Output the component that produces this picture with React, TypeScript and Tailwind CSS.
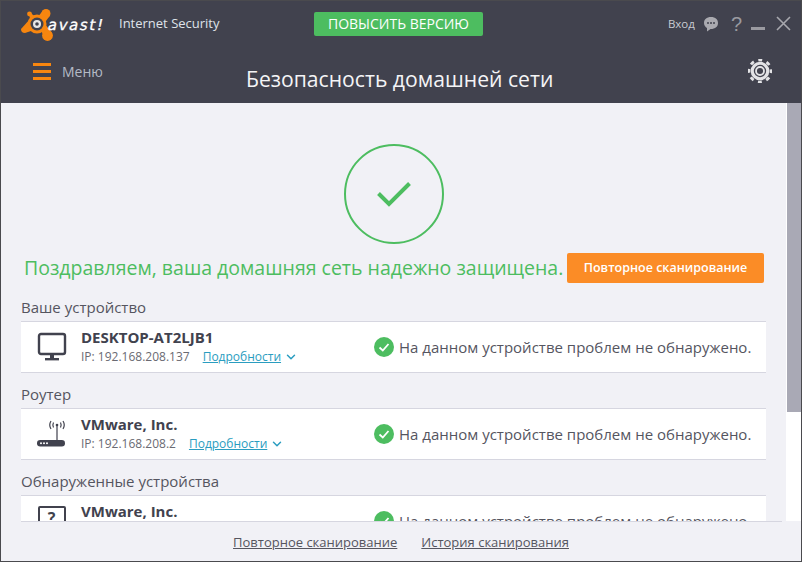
import { ChevronDown } from 'lucide-react';

const font = "font-['Open_Sans','Noto_Sans',sans-serif]";

function Logo() {
    return (
        <div className="flex w-[84px] items-center pt-[3px]">
            <svg width="34" height="32" viewBox="0 0 34 32" className="shrink-0">
                <g fill="#f7860f">
                    <circle cx="16" cy="15" r="9.5" />
                    <circle cx="25" cy="4.5" r="4.5" />
                    <circle cx="26.5" cy="26.5" r="5.4" />
                    <circle cx="8.5" cy="5" r="2.4" />
                    <path d="M16 9 L22 1.5 L29 6.5 L22 16 Z" />
                    <path d="M18 18 L24 15 L31 24 L25 31 Z" />
                    <path d="M7.5 5.5 L10 4 L15 9 L11 12 Z" />
                    <path d="M0 20 L9 10 L13 21 L4 24 Q0 24 0 20 Z" />
                </g>
                <circle cx="16" cy="15" r="6.5" fill="#41424e" />
                <circle cx="16" cy="15" r="4" fill="#e8e8e8" />
                <circle cx="16" cy="15" r="1.8" fill="#41424e" />
            </svg>
            <span className="-ml-[7px] -skew-x-12 font-['DejaVu_Sans',sans-serif] text-[15px] leading-none tracking-[1.6px] text-white [-webkit-text-stroke:0.3px_white]">
                avast!
            </span>
        </div>
    );
}

function Gear() {
    return (
        <svg width="24" height="24" viewBox="0 0 26 26">
            <circle cx="13" cy="13" r="8.4" fill="none" stroke="#e3e3e6" strokeWidth="3.4" />
            <circle cx="13" cy="13" r="12" fill="none" stroke="#e3e3e6" strokeWidth="3" strokeDasharray="4.3 5.1" strokeDashoffset="2.1" />
            <circle cx="13" cy="13" r="4.3" fill="none" stroke="#e3e3e6" strokeWidth="2" />
        </svg>
    );
}

function MonitorIcon() {
    return (
        <svg width="30" height="30" viewBox="0 0 30 30">
            <rect x="2" y="2" width="26" height="20" rx="2" fill="none" stroke="#41424e" strokeWidth="2.4" />
            <rect x="13" y="23" width="4" height="3" fill="#41424e" />
            <rect x="8" y="26" width="14" height="2.4" fill="#41424e" />
        </svg>
    );
}

function RouterIcon() {
    return (
        <svg width="30" height="30" viewBox="0 0 30 30">
            <g fill="none" stroke="#41424e" strokeWidth="1.2">
                <path d="M14 2 Q11.5 6 14 10" />
                <path d="M16.5 3.5 Q15.2 6 16.5 8.5" />
                <path d="M23.5 3.5 Q24.8 6 23.5 8.5" />
                <path d="M26 2 Q28.5 6 26 10" />
            </g>
            <circle cx="20" cy="6" r="1.3" fill="#41424e" />
            <rect x="19.4" y="6" width="1.2" height="16" fill="#41424e" />
            <rect x="0" y="21" width="28" height="6.5" rx="3.2" fill="#41424e" />
            <circle cx="4" cy="24.2" r="1" fill="#fff" />
            <circle cx="7" cy="24.2" r="1" fill="#fff" />
            <circle cx="10" cy="24.2" r="1" fill="#fff" />
        </svg>
    );
}

function UnknownIcon() {
    return (
        <div className="flex h-[30px] w-[28px] items-center justify-center rounded-[2px] border-2 border-[#41424e] pb-[6px] text-[16px] font-bold text-[#41424e]">
            ?
        </div>
    );
}

function OkCheck() {
    return (
        <svg width="20" height="20" viewBox="0 0 20 20" className="shrink-0">
            <circle cx="10" cy="10" r="10" fill="#4dbd60" />
            <path d="M5.5 10.5 L8.8 13.5 L14.5 7" fill="none" stroke="#fff" strokeWidth="1.8" />
        </svg>
    );
}

type DeviceRowProps = {
    icon: React.ReactNode;
    name: string;
    ip: string;
};

function DeviceRow({ icon, name, ip }: DeviceRowProps) {
    return (
        <div className="flex h-[52px] w-[745px] items-center border-y border-[#d6d6e0] bg-white">
            <div className="flex w-[60px] shrink-0 justify-center pl-[1px]">{icon}</div>
            <div className="w-[293px] shrink-0 pb-[1px] text-[#41424e]">
                <div className="mb-[2px] text-[15px] leading-[19px] font-bold">{name}</div>
                <div className="flex items-center text-[12px] leading-[16px] text-[#6a6a72]">
                    <span>IP: {ip}</span>
                    <a className="ml-[13px] text-[#2a9dc0] underline">Подробности</a>
                    <ChevronDown size={14} strokeWidth={2.5} className="ml-[3px] text-[#2a9dc0]" />
                </div>
            </div>
            <OkCheck />
            <span className="ml-[5px] text-[15px] whitespace-nowrap text-[#55555f]">
                На данном устройстве проблем не обнаружено.
            </span>
        </div>
    );
}

function SectionTitle({ children }: { children: React.ReactNode }) {
    return <div className="h-[35px] pt-[11px] text-[15px] leading-[20px] text-[#55555f]">{children}</div>;
}

export default function App() {
    return (
        <div className={`${font} flex h-[562px] w-[802px] flex-col overflow-hidden border border-[#4a4a4e] bg-[#f1f1f6]`}>
            <header className="h-[102px] shrink-0 bg-[#41424e]">
                <div className="flex h-[43px] items-center pt-[2px] pl-[20px]">
                    <Logo />
                    <span className="ml-[14px] w-[195px] text-[13px] text-[#dfe3ea]">Internet Security</span>
                    <button className="h-[24px] w-[169px] rounded-[2px] bg-[#4dbd60] text-[14px] text-white">
                        ПОВЫСИТЬ ВЕРСИЮ
                    </button>
                    <span className="ml-auto text-[11.5px] text-[#c8cbd2]">Вход</span>
                    <svg width="16" height="16" viewBox="0 0 16 16" className="ml-[8px]">
                        <path d="M8 1 C3.5 1 1 3.5 1 7 C1 9.5 2.5 11 4 12 L4 15.5 L7.5 13 C12.5 13 15 10.5 15 7 C15 3.5 12.5 1 8 1 Z" fill="#aaaab0" />
                        <circle cx="5" cy="7" r="1" fill="#41424e" />
                        <circle cx="8" cy="7" r="1" fill="#41424e" />
                        <circle cx="11" cy="7" r="1" fill="#41424e" />
                    </svg>
                    <span className="ml-[12px] font-['Liberation_Sans',sans-serif] text-[20px] leading-none text-[#9a9aa0]">?</span>
                    <div className="mt-[10px] ml-[9px] h-[3px] w-[14px] bg-[#9a9aa0]" />
                    <svg width="15" height="15" viewBox="0 0 15 15" className="mr-[10px] ml-[11px]">
                        <path d="M1 1 L14 14 M14 1 L1 14" stroke="#a8a8ae" strokeWidth="1.6" />
                    </svg>
                </div>
                <div className="flex h-[59px] items-start">
                    <div className="flex w-[245px] items-center pt-[17px] pl-[32px]">
                        <div className="flex w-[18px] flex-col gap-[4px]">
                            <div className="h-[3px] bg-[#f7860f]" />
                            <div className="h-[3px] bg-[#f7860f]" />
                            <div className="h-[3px] bg-[#f7860f]" />
                        </div>
                        <span className="ml-[11px] text-[14px] text-[#b4bac6]">Меню</span>
                    </div>
                    <h1 className="pt-[20px] text-[21.15px] leading-[30px] whitespace-nowrap text-[#f4f4f6]">
                        Безопасность домашней сети
                    </h1>
                    <div className="ml-auto pt-[15px] pr-[29px]">
                        <Gear />
                    </div>
                </div>
            </header>
            <div className="flex h-[418px] shrink-0 bg-white">
                <main className="h-full w-[785px] shrink-0 overflow-hidden bg-[#f1f1f6] pl-[20px]">
                    <div className="flex justify-center pt-[41px] pr-[20px]">
                        <div className="flex h-[100px] w-[100px] items-center justify-center rounded-full border-2 border-[#4dbd60]">
                            <svg width="34" height="26" viewBox="0 0 34 26">
                                <path d="M1.5 12.5 L12 23 L32.5 2.5" fill="none" stroke="#4dbd60" strokeWidth="4" />
                            </svg>
                        </div>
                    </div>
                    <div className="mt-[9px] mb-[3px] flex h-[30px] items-center">
                        <span className="ml-[3px] w-[543px] shrink-0 text-[19.5px] whitespace-nowrap text-[#4dbd60]">
                            Поздравляем, ваша домашняя сеть надежно защищена.
                        </span>
                        <button className="h-[30px] w-[197px] rounded-[2px] bg-[#fb8c26] text-[12.5px] font-semibold text-white">
                            Повторное сканирование
                        </button>
                    </div>
                    <SectionTitle>Ваше устройство</SectionTitle>
                    <DeviceRow icon={<MonitorIcon />} name="DESKTOP-AT2LJB1" ip="192.168.208.137" />
                    <SectionTitle>Роутер</SectionTitle>
                    <DeviceRow icon={<RouterIcon />} name="VMware, Inc." ip="192.168.208.2" />
                    <SectionTitle>Обнаруженные устройства</SectionTitle>
                    <DeviceRow icon={<UnknownIcon />} name="VMware, Inc." ip="192.168.208.1" />
                </main>
                <div className="h-full flex-1 bg-white pl-[1px]">
                    <div className="h-[309px] bg-[#a9a9b5]" />
                </div>
            </div>
            <footer className="relative flex flex-1 items-start justify-center gap-[24px] pt-[12px] text-[13px] text-[#55555f]">
                <div className="absolute top-0 left-[20px] h-px w-[761px] bg-[#d6d6e0]" />
                <a className="underline">Повторное сканирование</a>
                <a className="underline">История сканирования</a>
            </footer>
        </div>
    );
}
